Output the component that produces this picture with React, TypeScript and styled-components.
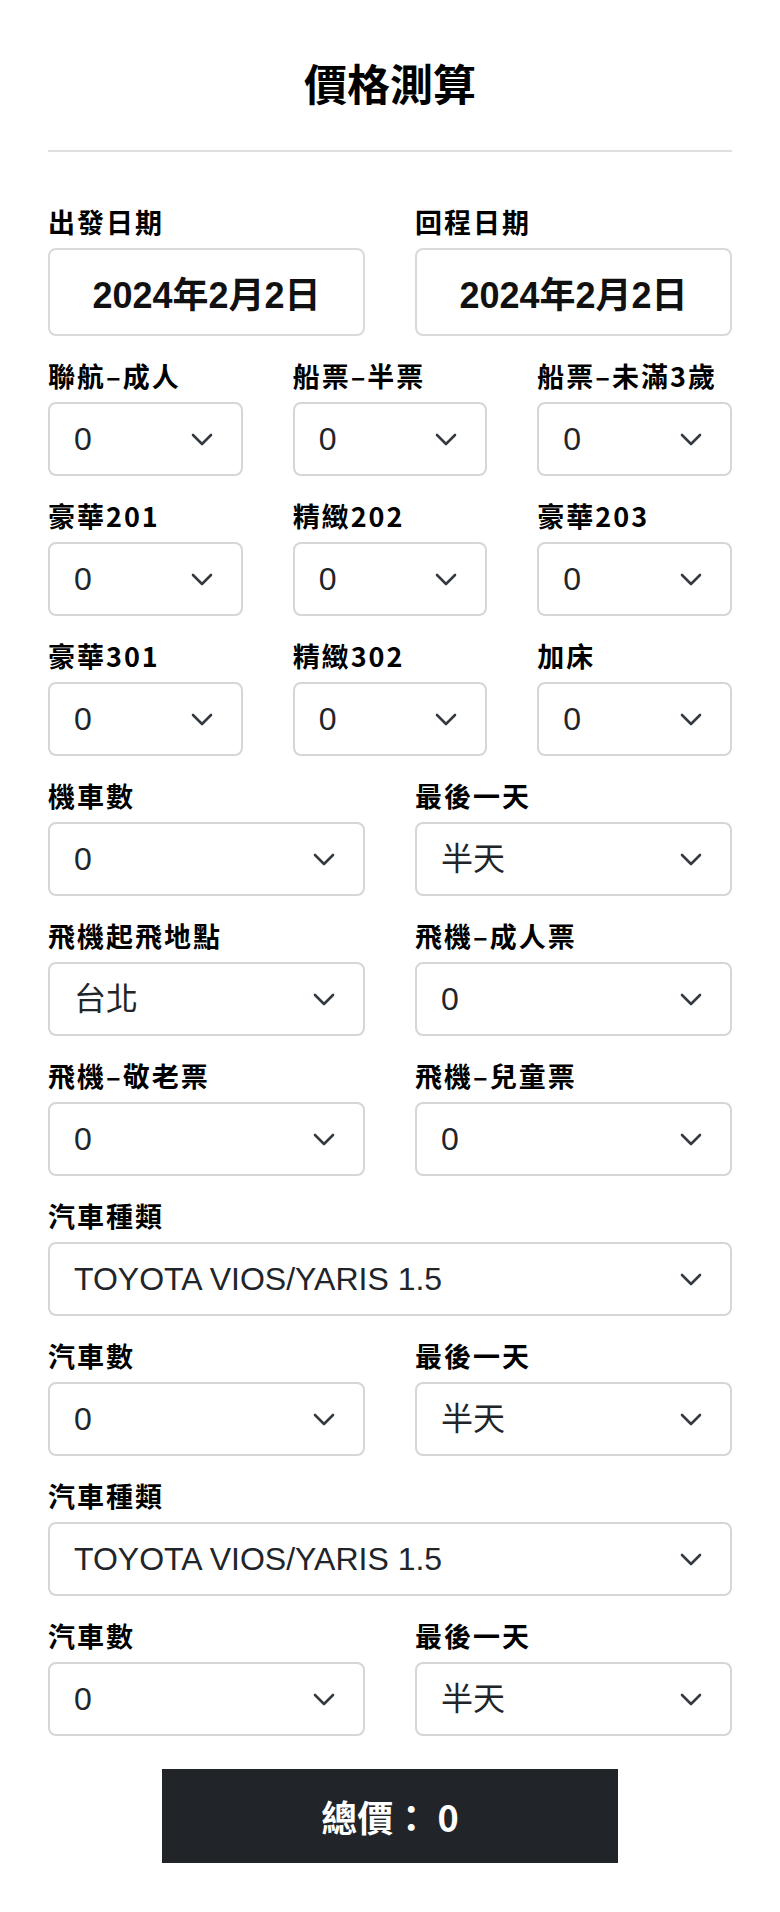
import React from "react";
import styled, { createGlobalStyle } from "styled-components";

const GlobalStyle = createGlobalStyle`
  html, body { margin: 0; padding: 0; background: #fff; }
  body {
    font-family: "Liberation Sans", "Noto Sans CJK TC", sans-serif;
    color: #212529;
  }
  * { box-sizing: border-box; }
`;

const Page = styled.main`
  width: 780px;
  padding: 57px 48px 48px;
`;

const Title = styled.h1`
  margin: 0;
  text-align: center;
  font-family: "Noto Sans CJK TC", sans-serif;
  font-weight: 700;
  font-size: 43px;
  line-height: 50px;
  color: #000;
`;

const Divider = styled.hr`
  margin: 43px 0 56px;
  border: 0;
  height: 2px;
  background: #dfdfdf;
`;

const Form = styled.form`
  display: flex;
  flex-direction: column;
  gap: 26px;
`;

const Row = styled.div<{ $cols: number }>`
  display: grid;
  grid-template-columns: repeat(${(p) => p.$cols}, 1fr);
  column-gap: 50px;
`;

const Field = styled.div`
  display: flex;
  flex-direction: column;
  min-width: 0;
`;

const Label = styled.label`
  font-family: "Noto Sans CJK TC", sans-serif;
  font-weight: 700;
  font-size: 27px;
  letter-spacing: 2px;
  line-height: 28px;
  margin-bottom: 12px;
  color: #000;
  white-space: nowrap;
`;

const DateBox = styled.input`
  width: 100%;
  height: 88px;
  border: 2px solid #dadada;
  border-radius: 8px;
  background: #fff;
  font-family: "Liberation Sans", "Noto Sans CJK TC", sans-serif;
  font-size: 36px;
  font-weight: 700;
  color: #111;
  text-align: center;
  padding: 0 8px;
  outline: none;
`;

const SelectWrap = styled.div`
  position: relative;
  width: 100%;
`;

const Select = styled.select`
  appearance: none;
  -webkit-appearance: none;
  width: 100%;
  height: 74px;
  border: 2px solid #d6d6d6;
  border-radius: 8px;
  background: #fff;
  padding: 0 64px 0 24px;
  font-family: "Liberation Sans", "Noto Sans CJK TC", sans-serif;
  font-size: 32px;
  color: #212529;
  outline: none;
`;

const Chevron = styled.svg`
  position: absolute;
  right: 30px;
  top: 50%;
  width: 22px;
  height: 13px;
  margin-top: -6px;
  pointer-events: none;
`;

const TotalBar = styled.div`
  display: flex;
  justify-content: center;
  margin-top: 33px;
`;

const TotalButton = styled.button`
  width: 456px;
  height: 94px;
  border: 0;
  border-radius: 0;
  background: #212529;
  color: #fff;
  font-family: "Noto Sans CJK TC", sans-serif;
  font-weight: 700;
  font-size: 36px;
  cursor: pointer;
`;

type SelectProps = { label: string; value: string; options?: string[] };

const Dropdown = ({ label, value, options }: SelectProps) => {
  const opts = options ?? [value];
  return (
    <Field>
      <Label>{label}</Label>
      <SelectWrap>
        <Select defaultValue={value} aria-label={label}>
          {opts.map((o) => (
            <option key={o} value={o}>
              {o}
            </option>
          ))}
        </Select>
        <Chevron viewBox="0 0 22 13" fill="none">
          <path
            d="M2 2l9 9 9-9"
            stroke="#343a40"
            strokeWidth="2.6"
            strokeLinecap="round"
            strokeLinejoin="round"
          />
        </Chevron>
      </SelectWrap>
    </Field>
  );
};

const DateField = ({ label, value }: { label: string; value: string }) => (
  <Field>
    <Label>{label}</Label>
    <DateBox type="text" readOnly value={value} aria-label={label} />
  </Field>
);

const nums = ["0", "1", "2", "3", "4", "5"];
const dayOpts = ["半天", "全天"];
const car = "TOYOTA VIOS/YARIS 1.5";

export default function App() {
  return (
    <>
      <GlobalStyle />
      <Page>
        <Title>價格測算</Title>
        <Divider />
        <Form onSubmit={(e) => e.preventDefault()}>
          <Row $cols={2}>
            <DateField label="出發日期" value="2024年2月2日" />
            <DateField label="回程日期" value="2024年2月2日" />
          </Row>
          <Row $cols={3}>
            <Dropdown label="聯航–成人" value="0" options={nums} />
            <Dropdown label="船票–半票" value="0" options={nums} />
            <Dropdown label="船票–未滿3歲" value="0" options={nums} />
          </Row>
          <Row $cols={3}>
            <Dropdown label="豪華201" value="0" options={nums} />
            <Dropdown label="精緻202" value="0" options={nums} />
            <Dropdown label="豪華203" value="0" options={nums} />
          </Row>
          <Row $cols={3}>
            <Dropdown label="豪華301" value="0" options={nums} />
            <Dropdown label="精緻302" value="0" options={nums} />
            <Dropdown label="加床" value="0" options={nums} />
          </Row>
          <Row $cols={2}>
            <Dropdown label="機車數" value="0" options={nums} />
            <Dropdown label="最後一天" value="半天" options={dayOpts} />
          </Row>
          <Row $cols={2}>
            <Dropdown label="飛機起飛地點" value="台北" options={["台北", "台中", "高雄"]} />
            <Dropdown label="飛機–成人票" value="0" options={nums} />
          </Row>
          <Row $cols={2}>
            <Dropdown label="飛機–敬老票" value="0" options={nums} />
            <Dropdown label="飛機–兒童票" value="0" options={nums} />
          </Row>
          <Row $cols={1}>
            <Dropdown label="汽車種類" value={car} />
          </Row>
          <Row $cols={2}>
            <Dropdown label="汽車數" value="0" options={nums} />
            <Dropdown label="最後一天" value="半天" options={dayOpts} />
          </Row>
          <Row $cols={1}>
            <Dropdown label="汽車種類" value={car} />
          </Row>
          <Row $cols={2}>
            <Dropdown label="汽車數" value="0" options={nums} />
            <Dropdown label="最後一天" value="半天" options={dayOpts} />
          </Row>
        </Form>
        <TotalBar>
          <TotalButton type="button">總價： 0</TotalButton>
        </TotalBar>
      </Page>
    </>
  );
}
